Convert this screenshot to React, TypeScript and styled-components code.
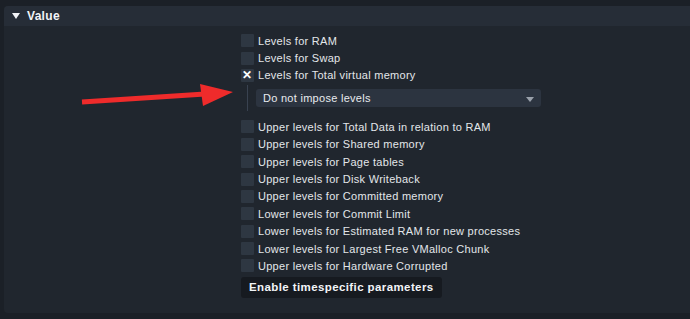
import React, { useState } from 'react';
import styled, { createGlobalStyle } from 'styled-components';

const GlobalStyle = createGlobalStyle`
  html, body {
    margin: 0;
    padding: 0;
    background: #1b2027;
    font-family: 'Liberation Sans', Arial, sans-serif;
  }
`;

const Page = styled.div`
  width: 690px;
  height: 319px;
  padding: 6px 0 0 4px;
  box-sizing: border-box;
  position: relative;
  overflow: hidden;
`;

const Panel = styled.div`
  background: #20262e;
  border-radius: 4px 0 0 4px;
  height: 307px;
  overflow: hidden;
`;

const PanelHeader = styled.div`
  height: 20px;
  background: #262d37;
  display: flex;
  align-items: center;
  padding-left: 8px;
  gap: 7px;
  color: #f2f4f7;
  font-weight: bold;
  font-size: 12px;
  letter-spacing: 0.3px;
`;

const Triangle = styled.span`
  width: 0;
  height: 0;
  border-left: 4px solid transparent;
  border-right: 4px solid transparent;
  border-top: 6px solid #f2f4f7;
`;

const Body = styled.div`
  padding: 6px 0 0 237px;
  display: flex;
  flex-direction: column;
`;

const Row = styled.label`
  display: flex;
  align-items: center;
  height: 17.4px;
  gap: 4px;
  color: #e3e6ea;
  font-size: 11px;
  letter-spacing: 0.28px;
  cursor: pointer;
`;

const Box = styled.span<{ $checked: boolean }>`
  width: 13px;
  height: 13px;
  background: #2e3742;
  border-radius: 1px;
  display: flex;
  align-items: center;
  justify-content: center;
  color: #ffffff;
  font-size: 12px;
  font-weight: bold;
  line-height: 1;
`;

const Sub = styled.div`
  display: flex;
  align-items: center;
  margin: 1px 0 7px 6px;
  height: 26px;
  border-left: 1px solid #394250;
  padding-left: 8px;
`;

const Select = styled.div`
  width: 285px;
  height: 18px;
  background: #2c3440;
  border-radius: 3px;
  display: flex;
  align-items: center;
  justify-content: space-between;
  padding: 0 7px;
  box-sizing: border-box;
  color: #e8ebef;
  font-size: 11px;
  letter-spacing: 0.28px;
`;

const Caret = styled.span`
  width: 0;
  height: 0;
  border-left: 4px solid transparent;
  border-right: 4px solid transparent;
  border-top: 5px solid #9aa1ab;
  margin-top: 2px;
`;

const Button = styled.button`
  align-self: flex-start;
  margin-top: 2px;
  margin-left: 0;
  height: 21px;
  padding: 0 8px;
  background: #161a20;
  border: none;
  border-radius: 3px;
  color: #f2f4f7;
  font-family: 'Liberation Sans', Arial, sans-serif;
  font-weight: bold;
  font-size: 11.5px;
  letter-spacing: 0.4px;
`;

const Arrow = styled.svg`
  position: absolute;
  left: 0;
  top: 0;
  pointer-events: none;
`;

const firstItems = ['Levels for RAM', 'Levels for Swap', 'Levels for Total virtual memory'];
const restItems = [
  'Upper levels for Total Data in relation to RAM',
  'Upper levels for Shared memory',
  'Upper levels for Page tables',
  'Upper levels for Disk Writeback',
  'Upper levels for Committed memory',
  'Lower levels for Commit Limit',
  'Lower levels for Estimated RAM for new processes',
  'Lower levels for Largest Free VMalloc Chunk',
  'Upper levels for Hardware Corrupted',
];

function Check({ label, checked, onToggle }: { label: string; checked: boolean; onToggle: () => void }) {
  return (
    <Row onClick={onToggle}>
      <Box $checked={checked}>{checked ? '✕' : ''}</Box>
      {label}
    </Row>
  );
}

export default function App() {
  const [checked, setChecked] = useState<Record<string, boolean>>({
    'Levels for Total virtual memory': true,
  });
  const toggle = (k: string) => setChecked({ ...checked, [k]: !checked[k] });

  return (
    <Page>
      <GlobalStyle />
      <Panel>
        <PanelHeader>
          <Triangle />
          Value
        </PanelHeader>
        <Body>
          {firstItems.map(l => (
            <Check key={l} label={l} checked={!!checked[l]} onToggle={() => toggle(l)} />
          ))}
          <Sub>
            <Select>
              Do not impose levels
              <Caret />
            </Select>
          </Sub>
          {restItems.map(l => (
            <Check key={l} label={l} checked={!!checked[l]} onToggle={() => toggle(l)} />
          ))}
          <Button>Enable timespecific parameters</Button>
        </Body>
      </Panel>
      <Arrow width="690" height="319">
        <line x1="82" y1="102" x2="205" y2="94" stroke="#ef2b2b" strokeWidth="5" />
        <polygon points="200,84 233,92 203,106" fill="#ef2b2b" />
      </Arrow>
    </Page>
  );
}
